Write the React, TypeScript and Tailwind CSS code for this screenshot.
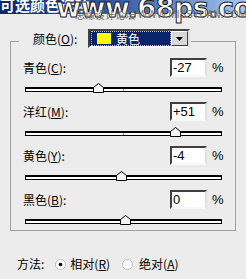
import React from "react";

const cjk = "font-['SimSun','Noto_Sans_CJK_SC',sans-serif]";

function Slider({ value }: { value: number }) {
  const left = 98.5 + (value / 100) * 98.5;
  return (
    <div className="relative ml-[14px] mt-[10px] h-[5px] w-[197px] border border-black border-t-2 bg-white">
      <div className="absolute left-[97px] top-0 h-[2px] w-px bg-[#a0a0a0]" />
      <svg
        className="absolute top-[-6px]"
        style={{ left: left - 5 }}
        width="11"
        height="10"
        viewBox="0 0 11 10"
      >
        <path d="M0.5 9.5 V4.5 L5.5 0.5 L10.5 4.5 V9.5 Z" fill="#f4f4f4" stroke="#000" strokeWidth="1" />
      </svg>
    </div>
  );
}

function Row({ label, u, rest, value, slider }: { label: string; u: string; rest: string; value: string; slider: number }) {
  return (
    <div className="mb-[10px]">
      <div className="flex h-[19px] items-center">
        <div className={`ml-[12px] w-[147px] text-[12px] text-black ${cjk}`}>
          {label}(<u>{u}</u>){rest}
        </div>
        <div className="flex h-[19px] w-[37px] items-center border-2 border-t-[#404040] border-l-[#404040] border-b-[#f8f8f8] border-r-[#e0e0e0] bg-white pl-[1px] font-['Liberation_Sans',sans-serif] text-[13px] text-black">
          {value}
        </div>
        <div className="ml-[5px] font-['Liberation_Sans',sans-serif] text-[13px] text-black">%</div>
      </div>
      <Slider value={slider} />
    </div>
  );
}

function Radio({ checked }: { checked: boolean }) {
  return (
    <svg width="11" height="11" viewBox="0 0 11 11">
      <circle cx="5.5" cy="5.5" r="5" fill="#fff" stroke="#b8b8b8" />
      {checked && <circle cx="5.5" cy="5.5" r="1.8" fill="#000" />}
    </svg>
  );
}

export default function App() {
  return (
    <div className="relative h-[279px] w-[246px] overflow-hidden bg-[#ececec]">
      <div className="relative h-[14px] w-full overflow-hidden bg-gradient-to-r from-[#0a246a] via-[#3a5fa8] to-[#a6caf0]">
        <div className={`absolute left-[0px] top-[-5px] whitespace-nowrap text-[15px] font-bold leading-[20px] text-white ${cjk}`}>
          可选颜色选项
        </div>
      </div>

      <div className="pointer-events-none absolute left-[56px] top-[-7px] whitespace-nowrap font-['DejaVu_Sans',sans-serif] text-[27px] font-bold leading-[30px] tracking-[-0.5px] text-white [-webkit-text-stroke:1px_#1a1a1a]">
        www.68ps.com
      </div>
      <div className={`pointer-events-none absolute left-[75px] top-[9px] flex items-center whitespace-nowrap text-[10px] leading-[12px] text-[#6e6e6e] ${cjk}`}>
        <span>思缘设计论坛</span>
        <span className="font-['Liberation_Sans',sans-serif] text-[10px]">&nbsp;WWW.MISSYUAN.COM</span>
      </div>

      <div className="relative ml-[10px] mt-[27px] w-[226px] border border-[#a0a0a0] pt-[16px]">
        <div className="absolute left-[8px] top-[-13px] flex items-center bg-[#ececec] px-[1px]">
          <div className={`ml-[13px] w-[55px] whitespace-nowrap text-[12px] text-black ${cjk}`}>
            颜色(<u>O</u>):
          </div>
          <div className="flex h-[19px] w-[102px] items-center border-2 border-t-[#404040] border-l-[#404040] border-b-[#f8f8f8] border-r-[#e0e0e0] bg-[#0a246a]">
            <div className="ml-[1px] flex h-[15px] flex-1 items-center border border-dotted border-[#c0c0c0]">
              <div className="ml-[5px] h-[11px] w-[14px] bg-[#ffff00]" />
              <span className={`ml-[5px] text-[12px] text-white ${cjk}`}>黄色</span>
            </div>
            <div className="flex h-[15px] w-[17px] items-center justify-center border border-t-white border-l-white border-b-[#404040] border-r-[#404040] bg-[#d8d8d8]">
              <svg width="7" height="4" viewBox="0 0 7 4">
                <path d="M0 0 H7 L3.5 4 Z" fill="#000" />
              </svg>
            </div>
          </div>
        </div>

        <Row label="青色" u="C" rest=":" value="-27" slider={-27} />
        <Row label="洋红" u="M" rest=":" value="+51" slider={51} />
        <Row label="黄色" u="Y" rest=":" value="-4" slider={-4} />
        <div className="-mb-[4px]">
          <Row label="黑色" u="B" rest=":" value="0" slider={0} />
        </div>
      </div>

      <div className={`mt-[24px] flex items-center text-[12px] text-black ${cjk}`}>
        <span className="ml-[17px]">方法:</span>
        <span className="ml-[11px] flex items-center"><Radio checked /></span>
        <span className="ml-[4px]">相对(<u>R</u>)</span>
        <span className="ml-[12px] flex items-center"><Radio checked={false} /></span>
        <span className="ml-[6px]">绝对(<u>A</u>)</span>
      </div>
    </div>
  );
}
